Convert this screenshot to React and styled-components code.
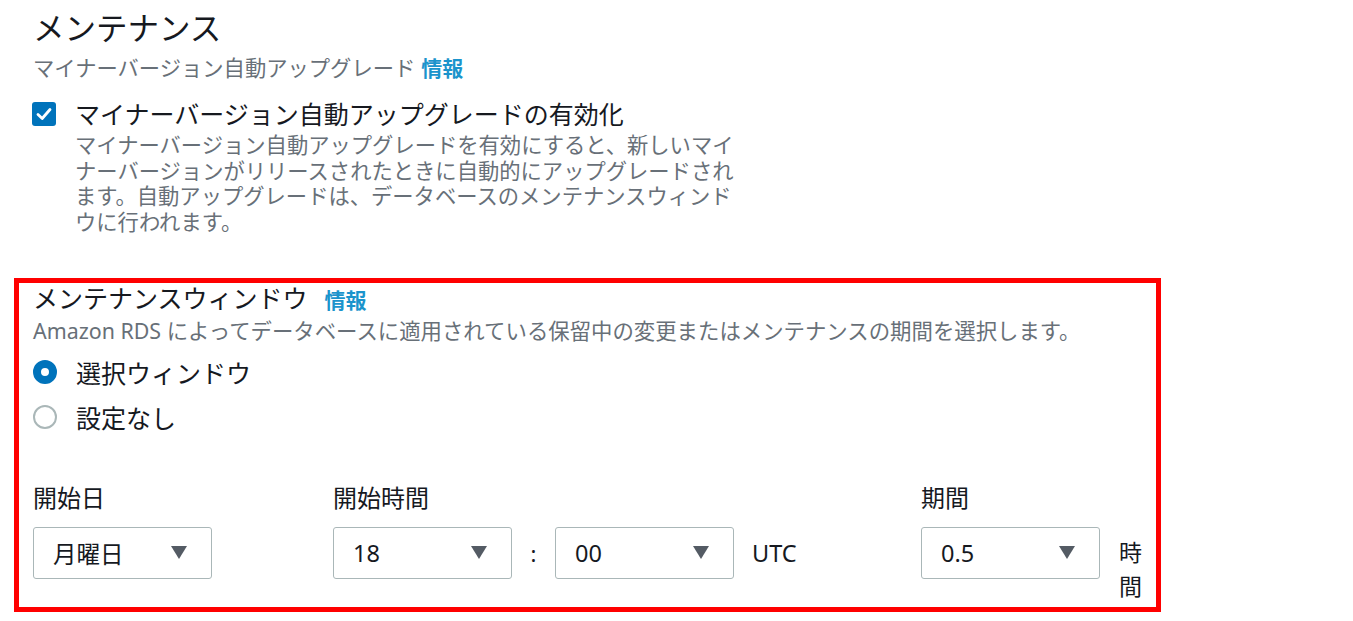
import styled, { createGlobalStyle } from "styled-components"

const Global = createGlobalStyle`
  body {
    margin: 0;
    background: #ffffff;
    font-family: "Noto Sans", "Noto Sans CJK JP", sans-serif;
    color: #16191f;
  }
`

const days = "月曜日"

export default function App() {
  return <>
    <Global />
    <Page>
      <Top>
        <Heading>メンテナンス</Heading>
        <Sub>マイナーバージョン自動アップグレード<Info $gap="6px">情報</Info></Sub>
        <CheckRow>
          <CheckBox>
            <svg width="16" height="14" viewBox="0 0 16 14">
              <path d="M2 7.5 L6.2 11.5 L14 2.5" fill="none" stroke="#fff" strokeWidth="2.8" strokeLinecap="round" strokeLinejoin="round" />
            </svg>
          </CheckBox>
          <div>
            <CheckLabel>マイナーバージョン自動アップグレードの有効化</CheckLabel>
            <CheckDesc>マイナーバージョン自動アップグレードを有効にすると、新しいマイナーバージョンがリリースされたときに自動的にアップグレードされます。自動アップグレードは、データベースのメンテナンスウィンドウに行われます。</CheckDesc>
          </div>
        </CheckRow>
      </Top>
      <WindowBox>
        <BoxTitle>メンテナンスウィンドウ<Info $gap="17px">情報</Info></BoxTitle>
        <BoxDesc>Amazon RDS によってデータベースに適用されている保留中の変更またはメンテナンスの期間を選択します。</BoxDesc>
        <RadioRow>
          <Radio $checked />
          <RadioText>選択ウィンドウ</RadioText>
        </RadioRow>
        <RadioRow>
          <Radio />
          <RadioText>設定なし</RadioText>
        </RadioRow>
        <Fields>
          <Field $width="300px">
            <FieldLabel>開始日</FieldLabel>
            <Select>{days}<Caret /></Select>
          </Field>
          <Field $width="588px">
            <FieldLabel>開始時間</FieldLabel>
            <Inline>
              <Select>18<Caret /></Select>
              <Colon>:</Colon>
              <Select>00<Caret /></Select>
              <Unit>UTC</Unit>
            </Inline>
          </Field>
          <Field>
            <FieldLabel>期間</FieldLabel>
            <Inline>
              <Select>0.5<Caret /></Select>
              <Hours>時間</Hours>
            </Inline>
          </Field>
        </Fields>
      </WindowBox>
    </Page>
  </>
}

const Page = styled.div`
  padding: 8px 0 0 14px;
`
const Top = styled.div`
  padding-left: 19px;
`
const Heading = styled.h2`
  margin: 0;
  font-size: 31.5px;
  line-height: 40px;
  font-weight: 400;
  color: #16191f;
`
const Sub = styled.div`
  margin-top: 5px;
  font-size: 21.3px;
  line-height: 30px;
  color: #687078;
`
const Info = styled.span`
  margin-left: ${p => p.$gap || "12px"};
  color: #1b94cc;
  font-weight: 700;
  font-size: 21px;
`
const CheckRow = styled.div`
  display: flex;
  gap: 19px;
  margin-top: 15px;
  margin-left: -1px;
`
const CheckBox = styled.div`
  flex: none;
  width: 24px;
  height: 24px;
  margin-top: 4px;
  border-radius: 3px;
  background: #0073bb;
  display: flex;
  align-items: center;
  justify-content: center;
`
const CheckLabel = styled.div`
  font-size: 25px;
  line-height: 32px;
  color: #16191f;
`
const CheckDesc = styled.div`
  margin-top: 2px;
  width: 664px;
  font-size: 21.3px;
  line-height: 25.7px;
  color: #687078;
`
const WindowBox = styled.section`
  box-sizing: border-box;
  width: 1147px;
  margin-top: 43px;
  border: 5px solid #ff0000;
  padding: 0 14px 4px;
`
const BoxTitle = styled.div`
  font-size: 25px;
  line-height: 30px;
  color: #16191f;
`
const BoxDesc = styled.div`
  margin-top: 2px;
  font-size: 21.4px;
  line-height: 28px;
  color: #687078;
`
const RadioRow = styled.div`
  display: flex;
  align-items: center;
  gap: 19px;
  height: 36px;
  margin-top: 9px;
`
const Radio = styled.span`
  box-sizing: border-box;
  width: 24px;
  height: 24px;
  border-radius: 50%;
  background: #fff;
  border: ${p => p.$checked ? "8px solid #0073bb" : "2px solid #aab7b8"};
`
const RadioText = styled.span`
  font-size: 25px;
  color: #16191f;
`
const Fields = styled.div`
  display: flex;
  margin-top: 48px;
`
const Field = styled.div`
  flex: ${p => p.$width ? `0 0 ${p.$width}` : "1"};
`
const FieldLabel = styled.div`
  font-size: 24px;
  line-height: 30px;
  margin-bottom: 14px;
  color: #16191f;
`
const Inline = styled.div`
  display: flex;
  align-items: flex-start;
`
const Select = styled.div`
  box-sizing: border-box;
  width: 179px;
  height: 52px;
  border: 1px solid #aab7b8;
  border-radius: 3px;
  padding: 0 24px 0 19px;
  display: flex;
  align-items: center;
  justify-content: space-between;
  font-size: 23.5px;
  color: #16191f;
`
const Caret = styled.span`
  width: 0;
  height: 0;
  border-left: 8px solid transparent;
  border-right: 8px solid transparent;
  border-top: 13px solid #545b64;
`
const Colon = styled.span`
  width: 43px;
  text-align: center;
  line-height: 52px;
  font-size: 22px;
`
const Unit = styled.span`
  margin-left: 18px;
  line-height: 52px;
  font-size: 23.5px;
`
const Hours = styled.span`
  width: 24px;
  margin-left: 19px;
  margin-top: 8px;
  font-size: 23px;
  line-height: 34px;
`
